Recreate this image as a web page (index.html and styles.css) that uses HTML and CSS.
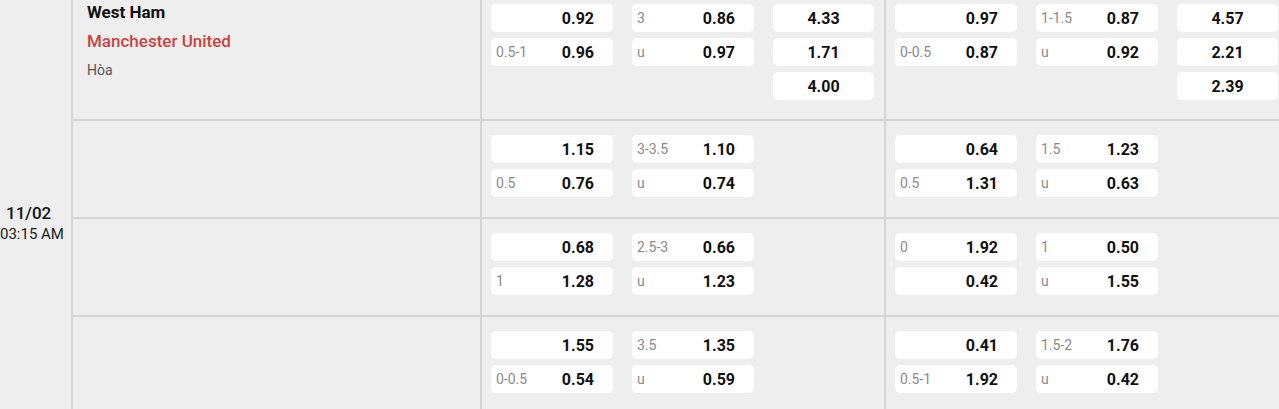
FILE: index.html
```html
<!DOCTYPE html>
<html lang="vi">
<head>
<meta charset="utf-8">
<title>Odds</title>
<link rel="stylesheet" href="styles.css">
</head>
<body>
<div class="board">
  <div class="date">
    <div class="date-day">11/02</div>
    <div class="date-time">03:15 AM</div>
  </div>
  <div class="rows">
    <div class="row row--first">
      <div class="team">
        <div class="names">
          <div class="home">West Ham</div>
          <div class="away">Manchester United</div>
          <div class="draw">Hòa</div>
        </div>
      </div>
      <div class="market">
        <div class="col col--wide">
          <div class="odd"><span class="lbl"></span><span class="num">0.92</span></div>
          <div class="odd"><span class="lbl">0.5-1</span><span class="num">0.96</span></div>
        </div>
        <div class="col col--wide">
          <div class="odd"><span class="lbl">3</span><span class="num">0.86</span></div>
          <div class="odd"><span class="lbl">u</span><span class="num">0.97</span></div>
        </div>
        <div class="col col--narrow">
          <div class="odd odd--center"><span class="num">4.33</span></div>
          <div class="odd odd--center"><span class="num">1.71</span></div>
          <div class="odd odd--center"><span class="num">4.00</span></div>
        </div>
      </div>
      <div class="market">
        <div class="col col--wide">
          <div class="odd"><span class="lbl"></span><span class="num">0.97</span></div>
          <div class="odd"><span class="lbl">0-0.5</span><span class="num">0.87</span></div>
        </div>
        <div class="col col--wide">
          <div class="odd"><span class="lbl">1-1.5</span><span class="num">0.87</span></div>
          <div class="odd"><span class="lbl">u</span><span class="num">0.92</span></div>
        </div>
        <div class="col col--narrow">
          <div class="odd odd--center"><span class="num">4.57</span></div>
          <div class="odd odd--center"><span class="num">2.21</span></div>
          <div class="odd odd--center"><span class="num">2.39</span></div>
        </div>
      </div>
    </div>

    <div class="row">
      <div class="team"></div>
      <div class="market">
        <div class="col col--wide">
          <div class="odd"><span class="lbl"></span><span class="num">1.15</span></div>
          <div class="odd"><span class="lbl">0.5</span><span class="num">0.76</span></div>
        </div>
        <div class="col col--wide">
          <div class="odd"><span class="lbl">3-3.5</span><span class="num">1.10</span></div>
          <div class="odd"><span class="lbl">u</span><span class="num">0.74</span></div>
        </div>
      </div>
      <div class="market">
        <div class="col col--wide">
          <div class="odd"><span class="lbl"></span><span class="num">0.64</span></div>
          <div class="odd"><span class="lbl">0.5</span><span class="num">1.31</span></div>
        </div>
        <div class="col col--wide">
          <div class="odd"><span class="lbl">1.5</span><span class="num">1.23</span></div>
          <div class="odd"><span class="lbl">u</span><span class="num">0.63</span></div>
        </div>
      </div>
    </div>

    <div class="row">
      <div class="team"></div>
      <div class="market">
        <div class="col col--wide">
          <div class="odd"><span class="lbl"></span><span class="num">0.68</span></div>
          <div class="odd"><span class="lbl">1</span><span class="num">1.28</span></div>
        </div>
        <div class="col col--wide">
          <div class="odd"><span class="lbl">2.5-3</span><span class="num">0.66</span></div>
          <div class="odd"><span class="lbl">u</span><span class="num">1.23</span></div>
        </div>
      </div>
      <div class="market">
        <div class="col col--wide">
          <div class="odd"><span class="lbl">0</span><span class="num">1.92</span></div>
          <div class="odd"><span class="lbl"></span><span class="num">0.42</span></div>
        </div>
        <div class="col col--wide">
          <div class="odd"><span class="lbl">1</span><span class="num">0.50</span></div>
          <div class="odd"><span class="lbl">u</span><span class="num">1.55</span></div>
        </div>
      </div>
    </div>

    <div class="row">
      <div class="team"></div>
      <div class="market">
        <div class="col col--wide">
          <div class="odd"><span class="lbl"></span><span class="num">1.55</span></div>
          <div class="odd"><span class="lbl">0-0.5</span><span class="num">0.54</span></div>
        </div>
        <div class="col col--wide">
          <div class="odd"><span class="lbl">3.5</span><span class="num">1.35</span></div>
          <div class="odd"><span class="lbl">u</span><span class="num">0.59</span></div>
        </div>
      </div>
      <div class="market">
        <div class="col col--wide">
          <div class="odd"><span class="lbl"></span><span class="num">0.41</span></div>
          <div class="odd"><span class="lbl">0.5-1</span><span class="num">1.92</span></div>
        </div>
        <div class="col col--wide">
          <div class="odd"><span class="lbl">1.5-2</span><span class="num">1.76</span></div>
          <div class="odd"><span class="lbl">u</span><span class="num">0.42</span></div>
        </div>
      </div>
    </div>
  </div>
</div>
</body>
</html>
```

FILE: styles.css
```css
* {
  box-sizing: border-box;
}

html,
body {
  margin: 0;
  padding: 0;
  overflow: hidden;
}

body {
  background: #eeeeee;
  font-family: Roboto, "Noto Sans", Arial, sans-serif;
  color: #111111;
}

.board {
  display: flex;
  width: 1279px;
  height: 409px;
  overflow: hidden;
}

.date {
  flex: none;
  width: 73px;
  padding: 203px 0 0 0;
  border-right: 2px solid #d5d5d5;
  display: flex;
  flex-direction: column;
  align-items: flex-start;
}

.date-day {
  padding-left: 6px;
  font-size: 17px;
  font-weight: 500;
  line-height: 20px;
  white-space: nowrap;
}

.date-time {
  margin-top: 2px;
  font-size: 15px;
  line-height: 18px;
  white-space: nowrap;
  color: #1a1a1a;
}

.rows {
  flex: none;
  display: flex;
  flex-direction: column;
}

.row {
  display: flex;
  border-bottom: 2px solid #d5d5d5;
}

.team {
  flex: none;
  width: 409px;
  padding-left: 14px;
  border-right: 2px solid #d5d5d5;
}

.names {
  margin-top: -2px;
  line-height: 29px;
}

.home {
  font-size: 17px;
  font-weight: 700;
  color: #111111;
}

.away {
  font-size: 17px;
  font-weight: 500;
  color: #c9433c;
}

.draw {
  font-size: 14px;
  color: #555555;
}

.market {
  flex: none;
  width: 404px;
  padding: 14px 0 20px 9px;
  border-right: 2px solid #d5d5d5;
  display: flex;
  gap: 19px;
  align-items: flex-start;
}

.row--first .market {
  padding-top: 4px;
  padding-bottom: 19px;
}

.col {
  flex: none;
  display: flex;
  flex-direction: column;
  gap: 6px;
}

.col--wide {
  width: 122px;
}

.col--narrow {
  width: 101px;
}

.odd {
  height: 28px;
  background: #ffffff;
  border-radius: 5px;
  display: flex;
  align-items: center;
  justify-content: space-between;
  padding: 0 19px 0 5px;
}

.odd--center {
  justify-content: center;
  padding: 0;
}

.lbl {
  font-size: 14px;
  color: #8a8a8a;
}

.num {
  font-size: 16px;
  font-weight: 700;
  color: #111111;
}
```
